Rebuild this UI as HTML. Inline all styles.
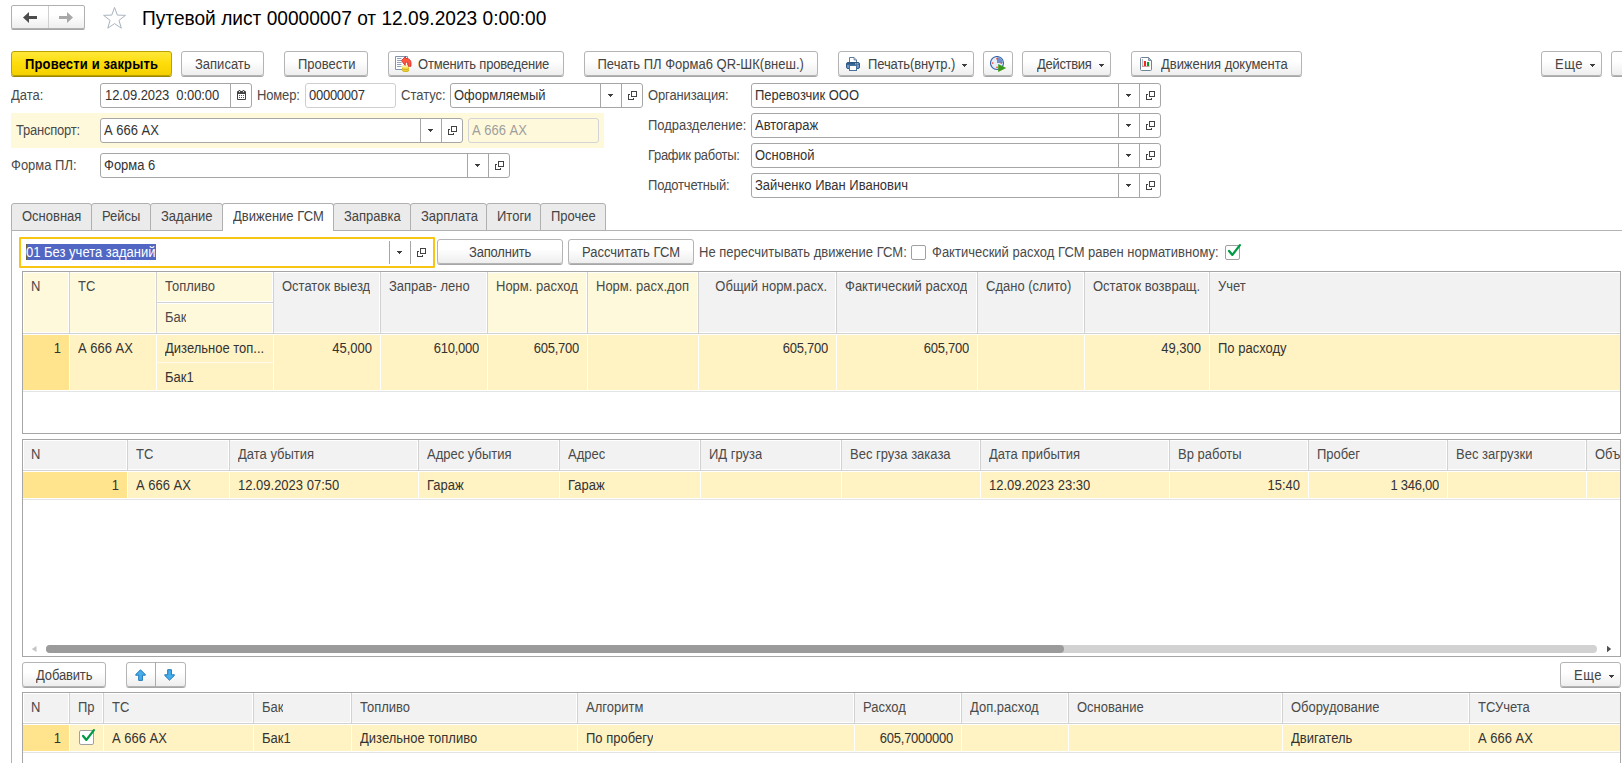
<!DOCTYPE html>
<html lang="ru">
<head>
<meta charset="utf-8">
<title>Путевой лист 00000007 от 12.09.2023 0:00:00</title>
<style>
*{box-sizing:border-box;margin:0;padding:0}
html,body{width:1622px;height:763px;overflow:hidden;background:#fff}
body{position:relative;font-family:"Liberation Sans",Arial,sans-serif;font-size:13px;color:#333;line-height:15px}
.t{position:absolute;white-space:pre;line-height:15px;height:15px;transform:scaleY(1.1);transform-origin:0 12px}
.lbl{color:#4a4a4a}
.btn{position:absolute;height:25px;border:1px solid #b4b4b4;border-radius:3px;background:linear-gradient(#ffffff 0%,#ffffff 40%,#eeeeee 100%);box-shadow:0 1px 0 0 #a6a6a6;white-space:pre;color:#444}
.btn .t{top:5px}
.btn.y{background:linear-gradient(#ffe83a 0%,#fddc0a 50%,#f5d000 100%);border-color:#bca200;box-shadow:0 1px 0 0 #9c8600;font-weight:bold;color:#000}
.fld{position:absolute;height:25px;border:1px solid #a6a6a6;border-radius:3px;background:#fff;white-space:pre;color:#333;overflow:hidden}
.fld .t{top:4px;left:3px}
.fld.ro{border-color:#cfcfcf}
.fld.dis{background:#fff9dc;border-color:#d3d3d8;color:#9e9e9e}
.sep{position:absolute;top:0;bottom:0;width:1px;background:#a6a6a6}
.arr{position:absolute;width:5px;height:1px;background:#3e3e3e}
.arr:before{content:"";position:absolute;left:1px;top:1px;width:3px;height:1px;background:#3e3e3e}
.arr:after{content:"";position:absolute;left:2px;top:2px;width:1px;height:1px;background:#3e3e3e}
.ico{position:absolute}
.tab{position:absolute;top:203px;height:28px;border:1px solid #b0b0b0;border-radius:3px 3px 0 0;background:#ebebeb;color:#444}
.tab .t{top:5px;left:10px}
.tab.on{background:#fff;border-bottom:none}
.grid{position:absolute;border:1px solid #a6a6a6;background:#fff}
.c{position:absolute;white-space:pre;line-height:15px;height:18px;overflow:hidden;transform:scaleY(1.1);transform-origin:0 12px}
.hc{color:#4a4a4a}
.bg{position:absolute}
.cb{position:absolute;width:15px;height:15px;border:1px solid #a0a0a0;border-radius:2px;background:#fff}
</style>
</head>
<body>
<!-- header -->
<div class="btn" style="left:11px;top:5px;width:74px;height:24px;border-radius:2px;border-color:#b0b0b0"></div>
<div style="position:absolute;left:48px;top:6px;width:1px;height:22px;background:#d0d0d0"></div>
<svg class="ico" style="left:22px;top:11px" width="16" height="13" viewBox="0 0 16 13"><path d="M1 6.5L7 1v4h8v3H7v4z" fill="#4d4d4d"/></svg>
<svg class="ico" style="left:58px;top:11px" width="16" height="13" viewBox="0 0 16 13"><path d="M15 6.5L9 1v4H1v3h8v4z" fill="#a8a8a8"/></svg>
<svg class="ico" style="left:102px;top:6px" width="25" height="24" viewBox="0 0 25 24"><path d="M12.55 1.40 L15.32 9.09 L23.49 9.35 L17.03 14.36 L19.31 22.20 L12.55 17.61 L5.79 22.20 L8.07 14.36 L1.61 9.35 L9.78 9.09z" fill="#fff" stroke="#a9b4bf" stroke-width="1" stroke-linejoin="miter"/></svg>
<div class="t" style="left:142px;top:7px;font-size:19.15px;line-height:24px;height:24px;color:#000;transform:scaleY(1.06);transform-origin:0 18.6px">Путевой лист 00000007 от 12.09.2023 0:00:00</div>
<!-- toolbar -->
<div class="btn y" style="left:11px;top:51px;width:161px"><div class="t" style="left:13px;letter-spacing:0.15px">Провести и закрыть</div></div>
<div class="btn " style="left:181px;top:51px;width:83px"><div class="t" style="left:13px">Записать</div></div>
<div class="btn " style="left:284px;top:51px;width:84px"><div class="t" style="left:13px">Провести</div></div>
<div class="btn " style="left:388px;top:51px;width:176px"><svg class="ico" style="left:6px;top:4px" width="17" height="17" viewBox="0 0 17 17"><path d="M.5.500h12v13H.5z" fill="#fff" stroke="#7f93ab"/><path d="M2 2.500h4.500M2 4.500h4.500M2 6.500h4.500M2 8.500h4.500M2 10.500h4.500" stroke="#8ea2ba"/><path d="M7.200 10.200v4.200c0 .9 1.500 1.500 3.400 1.500s3.400-.6 3.400-1.500v-4.200z" fill="#f2d63c"/><ellipse cx="10.600" cy="10.200" rx="3.400" ry="1.400" fill="#fbf0a0"/><path d="M7.200 12.100c0 .9 1.500 1.500 3.400 1.500s3.400-.6 3.400-1.500M7.200 14c0 .9 1.500 1.500 3.400 1.500s3.400-.6 3.400-1.500" fill="none" stroke="#c4a41c" stroke-width=".8"/><path d="M6.400 4.600L10.500.4v2c3.700-.1 5.500 1.800 5.500 4.600v3.300h-2.700V7.600c0-1.200-.9-1.400-2.800-1.400l-.4 3.200z" fill="#ff5a3c" stroke="#d8202a" stroke-width=".8" stroke-linejoin="round"/></svg><div class="t" style="left:29px;letter-spacing:-0.19px">Отменить проведение</div></div>
<div class="btn " style="left:584px;top:51px;width:234px"><div class="t" style="left:12.5px">Печать ПЛ Форма6 QR-ШК(внеш.)</div></div>
<div class="btn " style="left:838px;top:51px;width:136px"><svg class="ico" style="left:7px;top:5px" width="14" height="14" viewBox="0 0 14 14"><path d="M3.500 5.500V.5h4.500l2.500 2.500v2.500z" fill="#fff" stroke="#5a7b9e"/><path d="M8 .5v2.500h2.500" fill="#b9c7d6" stroke="#5a7b9e" stroke-width=".8"/><rect x=".5" y="5.500" width="13" height="6" rx="1.500" fill="#7397c2" stroke="#2b5884"/><rect x="1" y="6" width="12" height="1.800" fill="#2f5d8a"/><rect x="9.300" y="6.300" width="1" height="1" fill="#fff"/><rect x="11.300" y="6.300" width="1" height="1" fill="#fff"/><rect x="3.500" y="8.500" width="7" height="5" fill="#fff" stroke="#47709a"/></svg><div class="arr" style="left:123px;top:12px"></div><div class="t" style="left:29px;letter-spacing:-0.1px">Печать(внутр.)</div></div>
<div class="btn " style="left:983px;top:51px;width:30px"><svg class="ico" style="left:6px;top:4px" width="17" height="17" viewBox="0 0 17 17"><circle cx="7" cy="7" r="6.500" fill="#e6edf8" stroke="#3462aa" stroke-width="1.100"/><path d="M7 7V1.200A5.800 5.800 0 0 1 12.800 7z" fill="#6e90cc"/><g fill="#f4472f"><circle cx="7" cy="2.700" r=".85"/><circle cx="11.300" cy="7" r=".85"/><circle cx="7" cy="11.300" r=".85"/><circle cx="2.700" cy="7" r=".85"/></g><path d="M8.200 8l8 4-8 4z" fill="#3a9a18"/></svg><div class="t" style="left:6px"></div></div>
<div class="btn " style="left:1022px;top:51px;width:89px"><div class="arr" style="left:76px;top:12px"></div><div class="t" style="left:14px;letter-spacing:-0.3px">Действия</div></div>
<div class="btn " style="left:1131px;top:51px;width:171px"><svg class="ico" style="left:8px;top:5px" width="12" height="14" viewBox="0 0 12 14"><path d="M1.500.500H8.500l3 3v9a1 1 0 0 1-1 1h-9a1 1 0 0 1-1-1v-11a1 1 0 0 1 1-1z" fill="#fff" stroke="#6f8296"/><path d="M8.500.500v3h3z" fill="#aab6c4" stroke="#6f8296" stroke-width=".8"/><path d="M2.500 2v7.500" stroke="#9aa8b4" stroke-width=".8"/><path d="M2 9.400h7.500" stroke="#c47884" stroke-width=".8"/><rect x="3.900" y="4" width="2.100" height="5" fill="#f5261a"/><rect x="7" y="5" width="2.100" height="4" fill="#0a9a28"/></svg><div class="t" style="left:29px;letter-spacing:-0.04px">Движения документа</div></div>
<div class="btn " style="left:1541px;top:51px;width:61px"><div class="arr" style="left:48px;top:12px"></div><div class="t" style="left:13px;letter-spacing:0.5px">Еще</div></div>
<div class="btn" style="left:1611px;top:51px;width:20px"></div>
<!-- fields -->
<div class="bg" style="left:11px;top:113px;width:593px;height:35px;background:#fff9dc"></div>
<div class="t lbl" style="left:11px;top:88px;">Дата:</div>
<div class="fld " style="left:100px;top:83px;width:152px"><div class="t" style="letter-spacing:-0.08px;left:4px">12.09.2023  0:00:00</div><div class="sep" style="left:129px"></div><svg class="ico" style="left:136px;top:6px" width="9" height="10" viewBox="0 0 9 10"><rect x="0" y="1" width="9" height="9" rx="1" fill="#424242"/><rect x="1" y="4" width="7" height="5" fill="#fff"/><circle cx="2.500" cy="1.100" r="1.100" fill="#424242"/><circle cx="6.500" cy="1.100" r="1.100" fill="#424242"/><circle cx="2.500" cy="1.700" r=".6" fill="#fff"/><circle cx="6.500" cy="1.700" r=".6" fill="#fff"/><g fill="#424242"><circle cx="2.500" cy="5.500" r=".6"/><circle cx="4.500" cy="5.500" r=".6"/><circle cx="6.500" cy="5.500" r=".6"/><circle cx="2.500" cy="7.500" r=".6"/><circle cx="4.500" cy="7.500" r=".6"/><circle cx="6.500" cy="7.500" r=".6"/></g></svg></div>
<div class="t lbl" style="left:257px;top:88px;letter-spacing:-0.15px;">Номер:</div>
<div class="fld ro" style="left:305px;top:83px;width:91px"><div class="t" style="letter-spacing:-0.27px">00000007</div></div>
<div class="t lbl" style="left:401px;top:88px;">Статус:</div>
<div class="fld " style="left:450px;top:83px;width:193px"><div class="t">Оформляемый</div><div class="sep" style="left:149px"></div><div class="arr" style="left:157px;top:10px"></div><div class="sep" style="left:170px"></div><svg class="ico" style="left:177px;top:7px" width="9" height="9" viewBox="0 0 9 9" shape-rendering="crispEdges"><path d="M3.5 0.5h5v5h-5z" fill="none" stroke="#424242"/><path d="M2 3.5H.5v5h5V7" fill="none" stroke="#424242"/></svg></div>
<div class="t lbl" style="left:648px;top:88px;letter-spacing:-0.13px;">Организация:</div>
<div class="fld " style="left:751px;top:83px;width:410px"><div class="t">Перевозчик ООО</div><div class="sep" style="left:366px"></div><div class="arr" style="left:374px;top:10px"></div><div class="sep" style="left:387px"></div><svg class="ico" style="left:394px;top:7px" width="9" height="9" viewBox="0 0 9 9" shape-rendering="crispEdges"><path d="M3.5 0.5h5v5h-5z" fill="none" stroke="#424242"/><path d="M2 3.5H.5v5h5V7" fill="none" stroke="#424242"/></svg></div>
<div class="t lbl" style="left:16px;top:123px;letter-spacing:-0.22px;">Транспорт:</div>
<div class="fld " style="left:100px;top:118px;width:363px"><div class="t">А 666 АХ</div><div class="sep" style="left:319px"></div><div class="arr" style="left:327px;top:10px"></div><div class="sep" style="left:340px"></div><svg class="ico" style="left:347px;top:7px" width="9" height="9" viewBox="0 0 9 9" shape-rendering="crispEdges"><path d="M3.5 0.5h5v5h-5z" fill="none" stroke="#424242"/><path d="M2 3.5H.5v5h5V7" fill="none" stroke="#424242"/></svg></div>
<div class="fld dis" style="left:468px;top:118px;width:131px"><div class="t">А 666 АХ</div></div>
<div class="t lbl" style="left:648px;top:118px;">Подразделение:</div>
<div class="fld " style="left:751px;top:113px;width:410px"><div class="t">Автогараж</div><div class="sep" style="left:366px"></div><div class="arr" style="left:374px;top:10px"></div><div class="sep" style="left:387px"></div><svg class="ico" style="left:394px;top:7px" width="9" height="9" viewBox="0 0 9 9" shape-rendering="crispEdges"><path d="M3.5 0.5h5v5h-5z" fill="none" stroke="#424242"/><path d="M2 3.5H.5v5h5V7" fill="none" stroke="#424242"/></svg></div>
<div class="t lbl" style="left:11px;top:158px;">Форма ПЛ:</div>
<div class="fld " style="left:100px;top:153px;width:410px"><div class="t">Форма 6</div><div class="sep" style="left:366px"></div><div class="arr" style="left:374px;top:10px"></div><div class="sep" style="left:387px"></div><svg class="ico" style="left:394px;top:7px" width="9" height="9" viewBox="0 0 9 9" shape-rendering="crispEdges"><path d="M3.5 0.5h5v5h-5z" fill="none" stroke="#424242"/><path d="M2 3.5H.5v5h5V7" fill="none" stroke="#424242"/></svg></div>
<div class="t lbl" style="left:648px;top:148px;letter-spacing:-0.3px;">График работы:</div>
<div class="fld " style="left:751px;top:143px;width:410px"><div class="t">Основной</div><div class="sep" style="left:366px"></div><div class="arr" style="left:374px;top:10px"></div><div class="sep" style="left:387px"></div><svg class="ico" style="left:394px;top:7px" width="9" height="9" viewBox="0 0 9 9" shape-rendering="crispEdges"><path d="M3.5 0.5h5v5h-5z" fill="none" stroke="#424242"/><path d="M2 3.5H.5v5h5V7" fill="none" stroke="#424242"/></svg></div>
<div class="t lbl" style="left:648px;top:178px;letter-spacing:-0.18px;">Подотчетный:</div>
<div class="fld " style="left:751px;top:173px;width:410px"><div class="t">Зайченко Иван Иванович</div><div class="sep" style="left:366px"></div><div class="arr" style="left:374px;top:10px"></div><div class="sep" style="left:387px"></div><svg class="ico" style="left:394px;top:7px" width="9" height="9" viewBox="0 0 9 9" shape-rendering="crispEdges"><path d="M3.5 0.5h5v5h-5z" fill="none" stroke="#424242"/><path d="M2 3.5H.5v5h5V7" fill="none" stroke="#424242"/></svg></div>
<!-- tabs -->
<div class="bg" style="left:11px;top:230px;width:1620px;height:1px;background:#b4b4b4"></div>
<div class="bg" style="left:11px;top:230px;width:1px;height:540px;background:#b4b4b4"></div>
<div class="tab" style="left:11px;width:81px"><div class="t">Основная</div></div>
<div class="tab" style="left:91px;width:60px"><div class="t">Рейсы</div></div>
<div class="tab" style="left:150px;width:73px"><div class="t">Задание</div></div>
<div class="tab" style="left:333px;width:78px"><div class="t">Заправка</div></div>
<div class="tab" style="left:410px;width:77px"><div class="t">Зарплата</div></div>
<div class="tab" style="left:486px;width:55px"><div class="t">Итоги</div></div>
<div class="tab" style="left:540px;width:66px"><div class="t">Прочее</div></div>
<div class="tab on" style="left:222px;width:112px"><div class="t">Движение ГСМ</div></div>
<div class="bg" style="left:19px;top:237px;width:416px;height:31px;border:2px solid #f8c612;border-radius:1px;background:#fff"></div>
<div class="bg" style="left:26px;top:244px;width:130px;height:16px;background:#5167c3"></div>
<div class="bg" style="left:26px;top:244px;width:1px;height:16px;background:#6b6138"></div>
<div class="t " style="left:26px;top:245px;color:#fff">01 Без учета заданий</div>
<div class="bg" style="left:389px;top:241px;width:1px;height:23px;background:#a6a6a6"></div>
<div class="arr" style="left:397px;top:251px"></div>
<div class="bg" style="left:410px;top:241px;width:1px;height:23px;background:#a6a6a6"></div>
<svg class="ico" style="left:417px;top:248px" width="9" height="9" viewBox="0 0 9 9" shape-rendering="crispEdges"><path d="M3.5 0.5h5v5h-5z" fill="none" stroke="#424242"/><path d="M2 3.5H.5v5h5V7" fill="none" stroke="#424242"/></svg>
<div class="btn " style="left:437px;top:239px;width:126px"><div class="t" style="left:31px;letter-spacing:-0.2px">Заполнить</div></div>
<div class="btn " style="left:568px;top:239px;width:126px"><div class="t" style="left:13px">Рассчитать ГСМ</div></div>
<div class="t lbl" style="left:699px;top:245px;">Не пересчитывать движение ГСМ:</div>
<div class="cb" style="left:911px;top:245px"></div>
<div class="t lbl" style="left:932px;top:245px;">Фактический расход ГСМ равен нормативному:</div>
<div class="cb" style="left:1225px;top:245px"></div>
<svg class="ico" style="left:1223px;top:243px" width="19" height="19" viewBox="0 0 19 19"><path d="M6.100 7.900l3.300 4 7.500-9.800" fill="none" stroke="#009a44" stroke-width="2.300" stroke-linecap="round" stroke-linejoin="round"/></svg>
<!-- grid 1 -->
<div class="grid" style="left:22px;top:271px;width:1599px;height:163px"></div>
<div class="bg" style="left:24px;top:273px;width:44px;height:59px;background:#fff9dc"></div>
<div class="bg" style="left:69px;top:272px;width:1px;height:61px;background:#d2d2d2"></div>
<div class="bg" style="left:23px;top:335px;width:46px;height:55px;background:#ffe38d"></div>
<div class="bg" style="left:70px;top:273px;width:85px;height:59px;background:#fff9dc"></div>
<div class="bg" style="left:156px;top:272px;width:1px;height:61px;background:#d2d2d2"></div>
<div class="bg" style="left:70px;top:335px;width:86px;height:55px;background:#fff2c3"></div>
<div class="bg" style="left:157px;top:273px;width:115px;height:59px;background:#fff9dc"></div>
<div class="bg" style="left:273px;top:272px;width:1px;height:61px;background:#d2d2d2"></div>
<div class="bg" style="left:157px;top:335px;width:116px;height:55px;background:#fff2c3"></div>
<div class="bg" style="left:274px;top:273px;width:105px;height:59px;background:#f2f2f2"></div>
<div class="bg" style="left:380px;top:272px;width:1px;height:61px;background:#d2d2d2"></div>
<div class="bg" style="left:274px;top:335px;width:106px;height:55px;background:#fff2c3"></div>
<div class="bg" style="left:381px;top:273px;width:105px;height:59px;background:#f2f2f2"></div>
<div class="bg" style="left:487px;top:272px;width:1px;height:61px;background:#d2d2d2"></div>
<div class="bg" style="left:381px;top:335px;width:106px;height:55px;background:#fff2c3"></div>
<div class="bg" style="left:488px;top:273px;width:98px;height:59px;background:#fff9dc"></div>
<div class="bg" style="left:587px;top:272px;width:1px;height:61px;background:#d2d2d2"></div>
<div class="bg" style="left:488px;top:335px;width:99px;height:55px;background:#fff2c3"></div>
<div class="bg" style="left:588px;top:273px;width:109px;height:59px;background:#fff9dc"></div>
<div class="bg" style="left:698px;top:272px;width:1px;height:61px;background:#d2d2d2"></div>
<div class="bg" style="left:588px;top:335px;width:110px;height:55px;background:#fff2c3"></div>
<div class="bg" style="left:699px;top:273px;width:136px;height:59px;background:#f2f2f2"></div>
<div class="bg" style="left:836px;top:272px;width:1px;height:61px;background:#d2d2d2"></div>
<div class="bg" style="left:699px;top:335px;width:137px;height:55px;background:#fff2c3"></div>
<div class="bg" style="left:837px;top:273px;width:139px;height:59px;background:#f2f2f2"></div>
<div class="bg" style="left:977px;top:272px;width:1px;height:61px;background:#d2d2d2"></div>
<div class="bg" style="left:837px;top:335px;width:140px;height:55px;background:#fff2c3"></div>
<div class="bg" style="left:978px;top:273px;width:105px;height:59px;background:#f2f2f2"></div>
<div class="bg" style="left:1084px;top:272px;width:1px;height:61px;background:#d2d2d2"></div>
<div class="bg" style="left:978px;top:335px;width:106px;height:55px;background:#fff2c3"></div>
<div class="bg" style="left:1085px;top:273px;width:123px;height:59px;background:#f2f2f2"></div>
<div class="bg" style="left:1209px;top:272px;width:1px;height:61px;background:#d2d2d2"></div>
<div class="bg" style="left:1085px;top:335px;width:124px;height:55px;background:#fff2c3"></div>
<div class="bg" style="left:1210px;top:273px;width:410px;height:59px;background:#f2f2f2"></div>
<div class="bg" style="left:1210px;top:335px;width:410px;height:55px;background:#fff2c3"></div>
<div class="bg" style="left:23px;top:333px;width:1597px;height:1px;background:#d2d2d2"></div>
<div class="bg" style="left:23px;top:391px;width:1597px;height:1px;background:#e4e4e4"></div>
<div class="bg" style="left:157px;top:301px;width:116px;height:1px;background:#fff"></div>
<div class="bg" style="left:157px;top:302px;width:116px;height:1px;background:#d2d2d2"></div>
<div class="bg" style="left:157px;top:303px;width:116px;height:1px;background:#fff"></div>
<div class="bg" style="left:157px;top:362px;width:116px;height:1px;background:#fffaf0"></div>
<div class="c hc" style="left:31px;top:279px;">N</div>
<div class="c hc" style="left:78px;top:279px;">ТС</div>
<div class="c hc" style="left:165px;top:279px;">Топливо</div>
<div class="c hc" style="left:282px;top:279px;">Остаток выезд</div>
<div class="c hc" style="left:389px;top:279px;">Заправ- лено</div>
<div class="c hc" style="left:496px;top:279px;">Норм. расход</div>
<div class="c hc" style="left:596px;top:279px;">Норм. расх.доп</div>
<div class="c hc" style="left:699px;top:279px;width:128px;text-align:right;">Общий норм.расх.</div>
<div class="c hc" style="left:845px;top:279px;">Фактический расход</div>
<div class="c hc" style="left:986px;top:279px;">Сдано (слито)</div>
<div class="c hc" style="left:1093px;top:279px;">Остаток возвращ.</div>
<div class="c hc" style="left:1218px;top:279px;">Учет</div>
<div class="c hc" style="left:165px;top:310px;">Бак</div>
<div class="c" style="left:23px;top:341px;width:38px;text-align:right;">1</div>
<div class="c" style="left:78px;top:341px;">А 666 АХ</div>
<div class="c" style="left:165px;top:341px;">Дизельное топ...</div>
<div class="c" style="left:274px;top:341px;width:98px;text-align:right;">45,000</div>
<div class="c" style="left:381px;top:341px;letter-spacing:-0.25px;width:98px;text-align:right;">610,000</div>
<div class="c" style="left:488px;top:341px;letter-spacing:-0.25px;width:91px;text-align:right;">605,700</div>
<div class="c" style="left:699px;top:341px;letter-spacing:-0.25px;width:129px;text-align:right;">605,700</div>
<div class="c" style="left:837px;top:341px;letter-spacing:-0.25px;width:132px;text-align:right;">605,700</div>
<div class="c" style="left:1085px;top:341px;width:116px;text-align:right;">49,300</div>
<div class="c" style="left:1218px;top:341px;">По расходу</div>
<div class="c" style="left:165px;top:370px;">Бак1</div>
<!-- grid 2 -->
<div class="grid" style="left:22px;top:439px;width:1599px;height:218px"></div>
<div class="bg" style="left:24px;top:441px;width:102px;height:28px;background:#f2f2f2"></div>
<div class="bg" style="left:127px;top:440px;width:1px;height:30px;background:#d2d2d2"></div>
<div class="bg" style="left:23px;top:472px;width:104px;height:26px;background:#ffe38d"></div>
<div class="bg" style="left:128px;top:441px;width:100px;height:28px;background:#f2f2f2"></div>
<div class="bg" style="left:229px;top:440px;width:1px;height:30px;background:#d2d2d2"></div>
<div class="bg" style="left:128px;top:472px;width:101px;height:26px;background:#fff2c3"></div>
<div class="bg" style="left:230px;top:441px;width:187px;height:28px;background:#f2f2f2"></div>
<div class="bg" style="left:418px;top:440px;width:1px;height:30px;background:#d2d2d2"></div>
<div class="bg" style="left:230px;top:472px;width:188px;height:26px;background:#fff2c3"></div>
<div class="bg" style="left:419px;top:441px;width:139px;height:28px;background:#f2f2f2"></div>
<div class="bg" style="left:559px;top:440px;width:1px;height:30px;background:#d2d2d2"></div>
<div class="bg" style="left:419px;top:472px;width:140px;height:26px;background:#fff2c3"></div>
<div class="bg" style="left:560px;top:441px;width:139px;height:28px;background:#f2f2f2"></div>
<div class="bg" style="left:700px;top:440px;width:1px;height:30px;background:#d2d2d2"></div>
<div class="bg" style="left:560px;top:472px;width:140px;height:26px;background:#fff2c3"></div>
<div class="bg" style="left:701px;top:441px;width:139px;height:28px;background:#f2f2f2"></div>
<div class="bg" style="left:841px;top:440px;width:1px;height:30px;background:#d2d2d2"></div>
<div class="bg" style="left:701px;top:472px;width:140px;height:26px;background:#fff2c3"></div>
<div class="bg" style="left:842px;top:441px;width:137px;height:28px;background:#f2f2f2"></div>
<div class="bg" style="left:980px;top:440px;width:1px;height:30px;background:#d2d2d2"></div>
<div class="bg" style="left:842px;top:472px;width:138px;height:26px;background:#fff2c3"></div>
<div class="bg" style="left:981px;top:441px;width:187px;height:28px;background:#f2f2f2"></div>
<div class="bg" style="left:1169px;top:440px;width:1px;height:30px;background:#d2d2d2"></div>
<div class="bg" style="left:981px;top:472px;width:188px;height:26px;background:#fff2c3"></div>
<div class="bg" style="left:1170px;top:441px;width:137px;height:28px;background:#f2f2f2"></div>
<div class="bg" style="left:1308px;top:440px;width:1px;height:30px;background:#d2d2d2"></div>
<div class="bg" style="left:1170px;top:472px;width:138px;height:26px;background:#fff2c3"></div>
<div class="bg" style="left:1309px;top:441px;width:137px;height:28px;background:#f2f2f2"></div>
<div class="bg" style="left:1447px;top:440px;width:1px;height:30px;background:#d2d2d2"></div>
<div class="bg" style="left:1309px;top:472px;width:138px;height:26px;background:#fff2c3"></div>
<div class="bg" style="left:1448px;top:441px;width:137px;height:28px;background:#f2f2f2"></div>
<div class="bg" style="left:1586px;top:440px;width:1px;height:30px;background:#d2d2d2"></div>
<div class="bg" style="left:1448px;top:472px;width:138px;height:26px;background:#fff2c3"></div>
<div class="bg" style="left:1587px;top:441px;width:33px;height:28px;background:#f2f2f2"></div>
<div class="bg" style="left:1587px;top:472px;width:33px;height:26px;background:#fff2c3"></div>
<div class="bg" style="left:23px;top:470px;width:1597px;height:1px;background:#d2d2d2"></div>
<div class="bg" style="left:23px;top:499px;width:1597px;height:1px;background:#e4e4e4"></div>
<div class="c hc" style="left:31px;top:447px;">N</div>
<div class="c hc" style="left:136px;top:447px;">ТС</div>
<div class="c hc" style="left:238px;top:447px;">Дата убытия</div>
<div class="c hc" style="left:427px;top:447px;">Адрес убытия</div>
<div class="c hc" style="left:568px;top:447px;">Адрес</div>
<div class="c hc" style="left:709px;top:447px;">ИД груза</div>
<div class="c hc" style="left:850px;top:447px;">Вес груза заказа</div>
<div class="c hc" style="left:989px;top:447px;">Дата прибытия</div>
<div class="c hc" style="left:1178px;top:447px;">Вр работы</div>
<div class="c hc" style="left:1317px;top:447px;">Пробег</div>
<div class="c hc" style="left:1456px;top:447px;">Вес загрузки</div>
<div class="c hc" style="left:1595px;top:447px;">Объ</div>
<div class="c" style="left:23px;top:478px;width:96px;text-align:right;">1</div>
<div class="c" style="left:136px;top:478px;">А 666 АХ</div>
<div class="c" style="left:238px;top:478px;">12.09.2023 07:50</div>
<div class="c" style="left:427px;top:478px;">Гараж</div>
<div class="c" style="left:568px;top:478px;">Гараж</div>
<div class="c" style="left:989px;top:478px;">12.09.2023 23:30</div>
<div class="c" style="left:1170px;top:478px;width:130px;text-align:right;">15:40</div>
<div class="c" style="left:1309px;top:478px;letter-spacing:-0.25px;width:130px;text-align:right;">1 346,00</div>
<div class="bg" style="left:46px;top:645px;width:1551px;height:8px;background:#d2d2d2;border-radius:4px"></div>
<div class="bg" style="left:46px;top:645px;width:1018px;height:8px;background:#9b9b9b;border-radius:4px"></div>
<svg class="ico" style="left:31px;top:645px" width="6" height="8" viewBox="0 0 6 8"><path d="M5.500 1v6L.8 4z" fill="#c4c4c4"/></svg>
<svg class="ico" style="left:1606px;top:645px" width="6" height="8" viewBox="0 0 6 8"><path d="M1 .8v6.400l4.200-3.200z" fill="#505050"/></svg>
<!-- grid 3 toolbar -->
<div class="btn " style="left:22px;top:662px;width:84px"><div class="t" style="left:13px;letter-spacing:-0.15px">Добавить</div></div>
<div class="btn" style="left:126px;top:662px;width:60px"></div>
<div class="bg" style="left:155px;top:662px;width:1px;height:26px;background:#ababab"></div>
<svg class="ico" style="left:134px;top:668px" width="13" height="14" viewBox="0 0 13 14"><path d="M6.500 1.800l4.800 4.800v.6H8.400v5.200H4.700V7.200H1.700v-.6z" fill="#45aeea" stroke="#1f78b8" stroke-width="1" stroke-linejoin="miter"/></svg>
<svg class="ico" style="left:163px;top:668px" width="13" height="14" viewBox="0 0 13 14"><path d="M4.700 1.700h3.700v5.100h3v.6l-4.900 4.800-4.800-4.800v-.6h3z" fill="#45aeea" stroke="#1f78b8" stroke-width="1" stroke-linejoin="miter"/></svg>
<div class="btn " style="left:1560px;top:662px;width:61px"><div class="arr" style="left:48px;top:12px"></div><div class="t" style="left:13px;letter-spacing:0.5px">Еще</div></div>
<!-- grid 3 -->
<div class="grid" style="left:22px;top:692px;width:1599px;height:89px"></div>
<div class="bg" style="left:24px;top:694px;width:44px;height:28px;background:#f2f2f2"></div>
<div class="bg" style="left:69px;top:693px;width:1px;height:30px;background:#d2d2d2"></div>
<div class="bg" style="left:23px;top:725px;width:46px;height:26px;background:#ffe38d"></div>
<div class="bg" style="left:70px;top:694px;width:32px;height:28px;background:#f2f2f2"></div>
<div class="bg" style="left:103px;top:693px;width:1px;height:30px;background:#d2d2d2"></div>
<div class="bg" style="left:70px;top:725px;width:33px;height:26px;background:#fff2c3"></div>
<div class="bg" style="left:104px;top:694px;width:148px;height:28px;background:#f2f2f2"></div>
<div class="bg" style="left:253px;top:693px;width:1px;height:30px;background:#d2d2d2"></div>
<div class="bg" style="left:104px;top:725px;width:149px;height:26px;background:#fff2c3"></div>
<div class="bg" style="left:254px;top:694px;width:96px;height:28px;background:#f2f2f2"></div>
<div class="bg" style="left:351px;top:693px;width:1px;height:30px;background:#d2d2d2"></div>
<div class="bg" style="left:254px;top:725px;width:97px;height:26px;background:#fff2c3"></div>
<div class="bg" style="left:352px;top:694px;width:224px;height:28px;background:#f2f2f2"></div>
<div class="bg" style="left:577px;top:693px;width:1px;height:30px;background:#d2d2d2"></div>
<div class="bg" style="left:352px;top:725px;width:225px;height:26px;background:#fff2c3"></div>
<div class="bg" style="left:578px;top:694px;width:275px;height:28px;background:#f2f2f2"></div>
<div class="bg" style="left:854px;top:693px;width:1px;height:30px;background:#d2d2d2"></div>
<div class="bg" style="left:578px;top:725px;width:276px;height:26px;background:#fff2c3"></div>
<div class="bg" style="left:855px;top:694px;width:105px;height:28px;background:#f2f2f2"></div>
<div class="bg" style="left:961px;top:693px;width:1px;height:30px;background:#d2d2d2"></div>
<div class="bg" style="left:855px;top:725px;width:106px;height:26px;background:#fff2c3"></div>
<div class="bg" style="left:962px;top:694px;width:105px;height:28px;background:#f2f2f2"></div>
<div class="bg" style="left:1068px;top:693px;width:1px;height:30px;background:#d2d2d2"></div>
<div class="bg" style="left:962px;top:725px;width:106px;height:26px;background:#fff2c3"></div>
<div class="bg" style="left:1069px;top:694px;width:212px;height:28px;background:#f2f2f2"></div>
<div class="bg" style="left:1282px;top:693px;width:1px;height:30px;background:#d2d2d2"></div>
<div class="bg" style="left:1069px;top:725px;width:213px;height:26px;background:#fff2c3"></div>
<div class="bg" style="left:1283px;top:694px;width:185px;height:28px;background:#f2f2f2"></div>
<div class="bg" style="left:1469px;top:693px;width:1px;height:30px;background:#d2d2d2"></div>
<div class="bg" style="left:1283px;top:725px;width:186px;height:26px;background:#fff2c3"></div>
<div class="bg" style="left:1470px;top:694px;width:150px;height:28px;background:#f2f2f2"></div>
<div class="bg" style="left:1470px;top:725px;width:150px;height:26px;background:#fff2c3"></div>
<div class="bg" style="left:23px;top:723px;width:1597px;height:1px;background:#d2d2d2"></div>
<div class="bg" style="left:23px;top:752px;width:1597px;height:1px;background:#e4e4e4"></div>
<div class="c hc" style="left:31px;top:700px;">N</div>
<div class="c hc" style="left:78px;top:700px;">Пр</div>
<div class="c hc" style="left:112px;top:700px;">ТС</div>
<div class="c hc" style="left:262px;top:700px;">Бак</div>
<div class="c hc" style="left:360px;top:700px;">Топливо</div>
<div class="c hc" style="left:586px;top:700px;">Алгоритм</div>
<div class="c hc" style="left:863px;top:700px;">Расход</div>
<div class="c hc" style="left:970px;top:700px;">Доп.расход</div>
<div class="c hc" style="left:1077px;top:700px;">Основание</div>
<div class="c hc" style="left:1291px;top:700px;">Оборудование</div>
<div class="c hc" style="left:1478px;top:700px;">ТСУчета</div>
<div class="c" style="left:23px;top:731px;width:38px;text-align:right;">1</div>
<div class="c" style="left:112px;top:731px;">А 666 АХ</div>
<div class="c" style="left:262px;top:731px;">Бак1</div>
<div class="c" style="left:360px;top:731px;">Дизельное топливо</div>
<div class="c" style="left:586px;top:731px;">По пробегу</div>
<div class="c" style="left:855px;top:731px;letter-spacing:-0.25px;width:98px;text-align:right;">605,7000000</div>
<div class="c" style="left:1291px;top:731px;">Двигатель</div>
<div class="c" style="left:1478px;top:731px;">А 666 АХ</div>
<div class="cb" style="left:79px;top:730px"></div>
<svg class="ico" style="left:77px;top:728px" width="19" height="19" viewBox="0 0 19 19"><path d="M6.100 7.900l3.300 4 7.500-9.800" fill="none" stroke="#009a44" stroke-width="2.300" stroke-linecap="round" stroke-linejoin="round"/></svg>
</body>
</html>
